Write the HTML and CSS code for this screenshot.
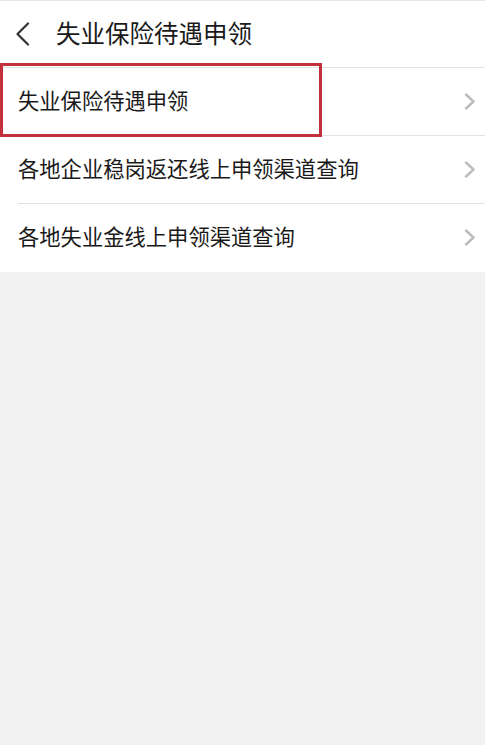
FILE: index.html
```html
<!DOCTYPE html>
<html lang="zh-CN">
<head>
<meta charset="utf-8">
<title>失业保险待遇申领</title>
<link rel="stylesheet" href="styles.css">
</head>
<body>
<div class="page">
  <header class="topbar">
    <span class="back">
      <svg width="16" height="24" viewBox="0 0 16 24"><path d="M13 1.5 L2.5 12 L13 22.5" fill="none" stroke="#333" stroke-width="2.2" stroke-linecap="round" stroke-linejoin="round"/></svg>
    </span>
    <h1 class="title">失业保险待遇申领</h1>
  </header>
  <ul class="list">
    <li class="row"><span class="label">失业保险待遇申领</span><span class="arrow"><svg width="12" height="17" viewBox="0 0 12 17"><path d="M2 1.5 L9.5 8.5 L2 15.5" fill="none" stroke="#bcbcbc" stroke-width="2.4" stroke-linecap="round" stroke-linejoin="round"/></svg></span></li>
    <li class="row"><span class="label">各地企业稳岗返还线上申领渠道查询</span><span class="arrow"><svg width="12" height="17" viewBox="0 0 12 17"><path d="M2 1.5 L9.5 8.5 L2 15.5" fill="none" stroke="#bcbcbc" stroke-width="2.4" stroke-linecap="round" stroke-linejoin="round"/></svg></span></li>
    <li class="row"><span class="label">各地失业金线上申领渠道查询</span><span class="arrow"><svg width="12" height="17" viewBox="0 0 12 17"><path d="M2 1.5 L9.5 8.5 L2 15.5" fill="none" stroke="#bcbcbc" stroke-width="2.4" stroke-linecap="round" stroke-linejoin="round"/></svg></span></li>
  </ul>
  <div class="highlight"></div>
</div>
</body>
</html>
```
FILE: styles.css
```css
html, body {
  margin: 0;
  padding: 0;
  background: #f2f2f2;
  font-family: "Noto Sans CJK SC", "Noto Sans", sans-serif;
  color: #1a1a1a;
}
.page {
  position: relative;
  width: 485px;
  min-height: 745px;
}
.topbar {
  display: flex;
  align-items: center;
  height: 66px;
  background: #fff;
  border-top: 1px solid #e6e6e6;
  border-bottom: 1px solid #e2e2e2;
  box-sizing: content-box;
}
.back {
  display: flex;
  width: 16px;
  margin-left: 15px;
  margin-right: 25px;
  margin-top: -1px;
}
.title {
  margin: 0;
  font-size: 24.5px;
  font-weight: 400;
  line-height: 1;
  margin-top: -2px;
}
.list {
  list-style: none;
  margin: 0;
  padding: 0;
  background: #fff;
}
.row {
  position: relative;
  display: flex;
  align-items: center;
  justify-content: space-between;
  height: 67px;
  padding: 0 9px 0 18px;
  border-bottom: 1px solid transparent;
}
.row + .row::before {
  content: "";
  position: absolute;
  left: 18px;
  right: 0;
  top: -1px;
  height: 1px;
  background: #e2e2e2;
}
.label {
  font-size: 21.3px;
  line-height: 1;
  margin-top: -3px;
}
.arrow {
  display: flex;
}
.highlight {
  position: absolute;
  left: 0;
  top: 63px;
  width: 316px;
  height: 68px;
  border: 3px solid #c3303b;
}
```
